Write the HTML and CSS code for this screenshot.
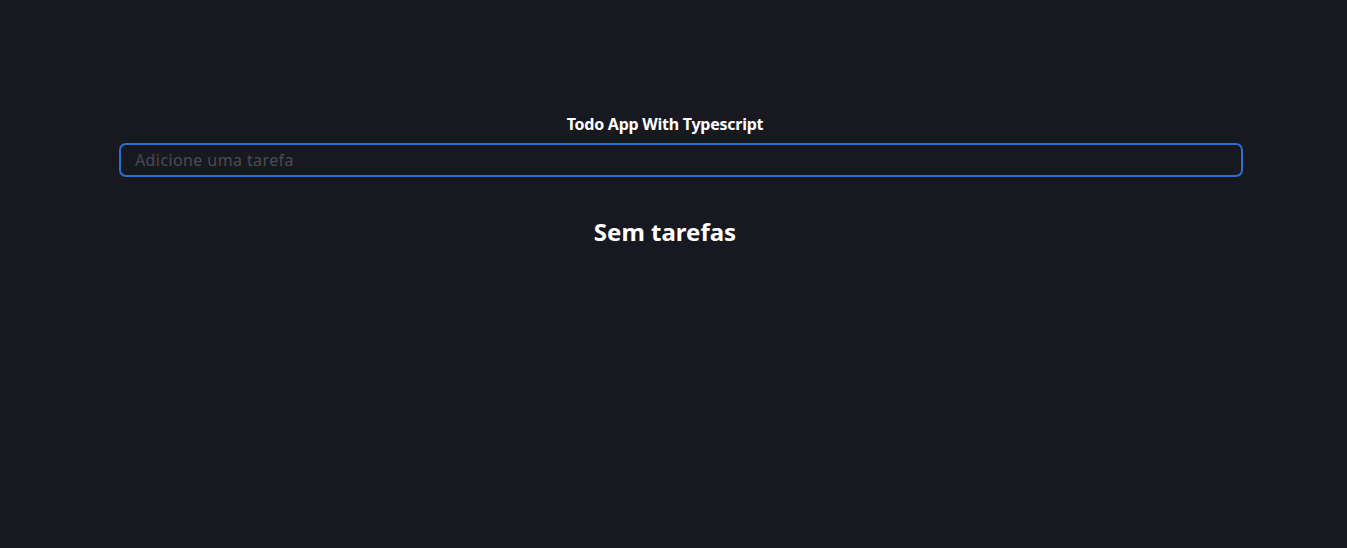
FILE: index.html
```html
<!DOCTYPE html>
<html lang="pt-BR">
<head>
<meta charset="utf-8">
<title>Todo App With Typescript</title>
<link rel="stylesheet" href="styles.css">
</head>
<body>
<main class="app">
  <h1 class="app-title">Todo App With Typescript</h1>
  <form class="todo-form">
    <input class="todo-input" type="text" placeholder="Adicione uma tarefa">
  </form>
  <h2 class="empty">Sem tarefas</h2>
</main>
</body>
</html>
```

FILE: styles.css
```css
html, body {
  margin: 0;
  padding: 0;
  background: #181920;
  height: 100%;
}
body {
  font-family: "Noto Sans", "Open Sans", sans-serif;
  color: #ffffff;
}
.app {
  width: 1092px;
  margin-left: 119px;
  padding-top: 113px;
  display: flex;
  flex-direction: column;
}
.app-title {
  margin: 0;
  font-size: 16px;
  font-weight: 700;
  line-height: 22px;
  letter-spacing: -0.25px;
  text-align: center;
}
.todo-form {
  margin-top: 8px;
}
.todo-input {
  box-sizing: content-box;
  width: 100%;
  height: 30px;
  padding: 0 14px;
  margin: 0;
  border: 2px solid #2b6fce;
  border-radius: 7px;
  background: #181920;
  color: #e5e5e5;
  font-family: inherit;
  font-size: 16px;
  letter-spacing: 0.4px;
  outline: none;
  display: block;
}
.todo-input::placeholder {
  color: #4b4b52;
}
.empty {
  margin: 39px 0 0;
  font-size: 24px;
  font-weight: 700;
  line-height: 32px;
  text-align: center;
}
```
